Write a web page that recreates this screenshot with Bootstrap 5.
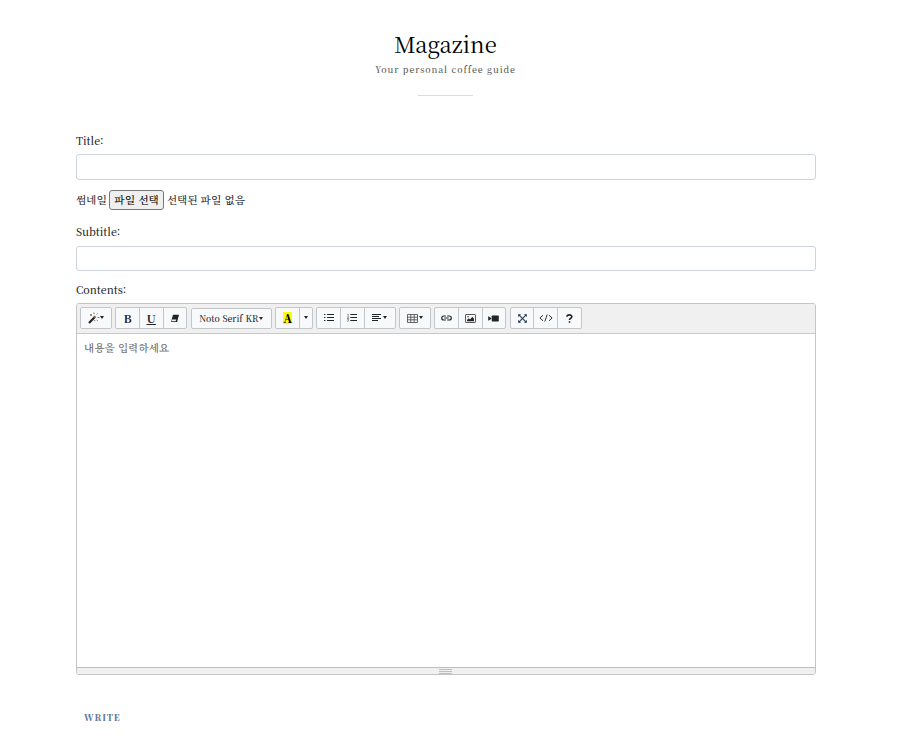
<!DOCTYPE html>
<html lang="ko">
<head>
<meta charset="utf-8">
<meta name="viewport" content="width=device-width, initial-scale=1">
<title>Magazine</title>
<link rel="stylesheet" href="https://cdn.jsdelivr.net/npm/bootstrap@5.3.0/dist/css/bootstrap.min.css">
<style>
body{font-family:"Noto Serif KR","Noto Serif CJK KR","Liberation Serif","Noto Sans CJK KR",serif;font-size:10.6px;font-weight:500;line-height:18px;color:#212529;background:#fff}
.page{width:740px;margin-left:76px;padding-top:29px}
.page-title{font-size:22px;line-height:30px;color:#000;font-weight:400;margin:0 1px 0 0}
.tagline{font-size:8.8px;line-height:14px;letter-spacing:.88px;color:#555;margin:4px 1px 0 0}
.rule{width:55px;height:1px;background:#ddd;margin:18px 1px 0 0}
.entry{margin-top:36px}
.field-label{display:block;height:18px}
.label-sub{margin-top:13px}
.label-body{margin-top:10px}
.form-control.line{height:26px;border-color:#ced4da;border-radius:3px;padding:2px 6px;font-size:11px}
.form-control.line.short{height:25px;margin-top:5px}
.file-row{height:20px;font-size:10.6px;line-height:20px;margin-top:10px}
.file-btn{width:55px;height:20px;border:1px solid #767676;border-radius:3px;background:#efefef;color:#000;font-size:10.6px;line-height:18px;padding:0 0 0 1px;margin:0 3px 0 2px;font-weight:500}
.editor{height:372px;border:1px solid #c5c5c5;border-radius:3px;overflow:hidden;margin-top:4px}
.tools{height:30px;background:#f0f0f0;border-bottom:1px solid #c9c9c9;padding:3px 0 0 3px;gap:3.5px}
.tools .btn-group{height:22px}
.tools .btn{height:22px;padding:0;border:1px solid #c3c6c9;border-radius:2px;background:#f8f9fa;color:#212529;font-family:inherit;font-size:8.7px;font-weight:500;line-height:1;display:flex;align-items:center;justify-content:center;flex:none;width:24.7px;margin-left:-1px}
.tools .btn:first-child{margin-left:0}
.tools .btn svg{display:block;flex:none}
.tools .btn.w32{width:31.7px}
.tools .btn.w14{width:14px}
.tools .btn.font-btn{width:81px;height:21px;margin-top:1px}
.tools .letter{font-weight:700;font-size:11.5px;padding-top:1px}
.tools .letter u{text-underline-offset:1px}
.caret{width:0;height:0;border:2.9px solid transparent;border-top:3px solid #212529;border-bottom:0;margin:0 0 1px 1px}
.swatch{background:#ff0;width:9px;height:12px;line-height:12px;font-size:11.5px;font-weight:900;text-align:center;color:#000}
.writing{height:333px;padding:6px 7px;color:#757575;font-size:10.6px;font-weight:600;line-height:16px}
.grip-bar{height:7px;background:#f0f0f0;border-top:1px solid #bdbdbd;padding-top:1px}
.grip{width:13px;height:5px;margin-left:362px;background:repeating-linear-gradient(#bebebe 0 1px,#f0f0f0 1px 2px)}
.write-btn{font-size:8.8px;line-height:14px;font-weight:900;letter-spacing:.8px;color:#65779a;padding:0;margin:36px 0 0 8px;border:0;background:none;font-family:inherit;display:block}
</style>
</head>
<body>
<main class="page">
  <header class="d-flex flex-column align-items-center">
    <h1 class="page-title">Magazine</h1>
    <div class="tagline">Your personal coffee guide</div>
    <div class="rule"></div>
  </header>
  <form class="entry">
    <label class="field-label" for="title">Title:</label>
    <input class="form-control line mt-1" id="title" type="text">
    <div class="file-row d-flex align-items-center"><span>썸네일</span><button type="button" class="file-btn">파일 선택</button><span>선택된 파일 없음</span></div>
    <label class="field-label label-sub" for="subtitle">Subtitle:</label>
    <input class="form-control line short" id="subtitle" type="text">
    <label class="field-label label-body">Contents:</label>
    <div class="editor">
      <div class="tools d-flex">
        <div class="btn-group"><button type="button" class="btn w32"><svg width="12" height="12" viewBox="0 0 12 12"><path d="M1 11 6.6 5.2" stroke="#212529" stroke-width="2.2"/><path d="M6 5.8 7.5 4.2" stroke="#8a5a3a" stroke-width="2"/><path d="M3 2v2M2 3h2M6 .5v1.5M9.7 1.4l-1 1M9.5 5.5h1.8M8.5 7.7l1.2 1.2M6.8 8v1.2" stroke="#666" stroke-width=".9"/></svg><i class="caret ms-0"></i></button></div>
        <div class="btn-group"><button type="button" class="btn letter">B</button><button type="button" class="btn letter"><u>U</u></button><button type="button" class="btn"><svg width="10" height="9" viewBox="0 0 10 9"><path d="M3 .8h6L7.1 8H1Z" fill="#212529"/><path d="M1.9 5.5h4.4L5.7 7.3H1.5Z" fill="#eee"/></svg></button></div>
        <div class="btn-group"><button type="button" class="btn font-btn">Noto Serif KR<i class="caret"></i></button></div>
        <div class="btn-group"><button type="button" class="btn"><span class="swatch">A</span></button><button type="button" class="btn w14"><i class="caret ms-0"></i></button></div>
        <div class="btn-group"><button type="button" class="btn"><svg width="10" height="8" viewBox="0 0 10 8"><path d="M3 .5h7M3 3.5h7M3 6.5h7M0 .5h1.4M0 3.5h1.4M0 6.5h1.4" stroke="#212529" stroke-width="1.2"/></svg></button><button type="button" class="btn"><svg width="10" height="8" viewBox="0 0 10 8"><path d="M3.3.5H10M3.3 3.5H10M3.3 6.5H10" stroke="#212529" stroke-width="1.2"/><path d="M.5.4 1.2.1v1.7M.3 2.8h1.3L.4 4.5h1.4M.3 5.4h1.3l-.6.7.6.6-.4.6H.2" fill="none" stroke="#555" stroke-width=".7"/></svg></button><button type="button" class="btn w32"><svg width="10" height="8" viewBox="0 0 10 8"><path d="M0 .5h9M0 2.5h7M0 4.5h9M0 6.5h6" stroke="#212529" stroke-width="1.1"/></svg><i class="caret"></i></button></div>
        <div class="btn-group"><button type="button" class="btn w32"><svg width="11" height="9" viewBox="0 0 11 9"><path d="M.5.5h10v8H.5ZM.5 3.2h10M.5 5.8h10M3.8.5v8M7.2.5v8" fill="none" stroke="#444" stroke-width=".8"/></svg><i class="caret"></i></button></div>
        <div class="btn-group"><button type="button" class="btn"><svg width="11" height="6" viewBox="0 0 12 6"><path d="M5.3.8H3a2.2 2.2 0 0 0 0 4.4h2.3M6.7.8H9a2.2 2.2 0 0 1 0 4.4H6.7M3.6 3h4.8" fill="none" stroke="#212529" stroke-width="1.3"/></svg></button><button type="button" class="btn"><svg width="11" height="9" viewBox="0 0 11 9"><rect x=".5" y=".5" width="10" height="8" rx=".6" fill="none" stroke="#444" stroke-width=".9"/><path d="M2 7.2V6l1.8-1.7L5 5.4l2.3-2.7L9 4.8v2.4Z" fill="#212529"/><circle cx="3" cy="2.8" r=".7" fill="#212529"/></svg></button><button type="button" class="btn"><svg width="11" height="7" viewBox="0 0 11 7"><rect x="3.7" y=".5" width="7.1" height="6" rx=".7" fill="#212529"/><path d="M.2 1.2 3.2 3v1L.2 5.8Z" fill="#212529"/></svg></button></div>
        <div class="btn-group"><button type="button" class="btn"><svg width="9" height="9" viewBox="0 0 9 9"><path d="m1 1 7 7M8 1 1 8" stroke="#34506e" stroke-width="1.1"/><path d="M.2.2h2.8L.2 3ZM8.8.2V3L6 .2ZM.2 8.8V6L3 8.8ZM8.8 8.8H6L8.8 6Z" fill="#212f43"/></svg></button><button type="button" class="btn"><svg width="14" height="8" viewBox="0 0 14 8"><path d="M4 1.2.9 4 4 6.8M10 1.2 13.1 4 10 6.8M8.2.5 5.8 7.5" fill="none" stroke="#333" stroke-width="1"/></svg></button><button type="button" class="btn"><svg width="7" height="9" viewBox="0 0 7 9"><path d="M1 2.8C1 .3 5.8.3 5.8 2.7c0 1.6-2.3 1.5-2.3 3.3" fill="none" stroke="#212529" stroke-width="1.6"/><path d="M2.7 7.2h1.6v1.6H2.7Z" fill="#212529"/></svg></button></div>
      </div>
      <div class="writing">내용을 입력하세요</div>
      <div class="grip-bar"><div class="grip"></div></div>
    </div>
    <button type="button" class="write-btn">WRITE</button>
  </form>
</main>
<script src="https://cdn.jsdelivr.net/npm/bootstrap@5.3.0/dist/js/bootstrap.bundle.min.js"></script>
</body>
</html>
